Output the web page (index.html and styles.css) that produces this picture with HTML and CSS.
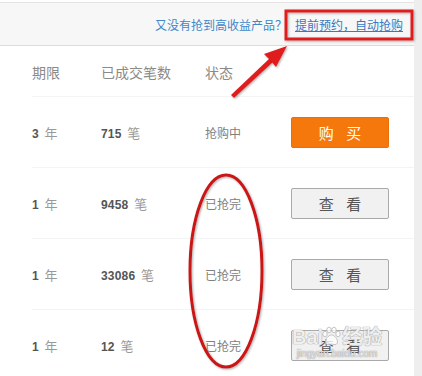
FILE: index.html
```html
<!DOCTYPE html>
<html lang="zh-CN">
<head>
    <meta charset="UTF-8">
    <title>产品列表</title>
    <link rel="stylesheet" href="styles.css">
</head>
<body>
    <div class="page">
        <div class="main">
            <div class="topbar">
                <span class="tip">又没有抢到高收益产品？</span>
                <a class="reserve" href="#">提前预约，自动抢购</a>
            </div>

            <div class="table">
                <div class="row head">
                    <div>期限</div>
                    <div>已成交笔数</div>
                    <div>状态</div>
                    <div></div>
                </div>
                <div class="row">
                    <div><b>3</b> <span class="unit">年</span></div>
                    <div><b>715</b> <span class="unit">笔</span></div>
                    <div class="status">抢购中</div>
                    <div><button class="btn buy">购 买</button></div>
                </div>
                <div class="row">
                    <div><b>1</b> <span class="unit">年</span></div>
                    <div><b>9458</b> <span class="unit">笔</span></div>
                    <div class="status">已抢完</div>
                    <div><button class="btn view">查 看</button></div>
                </div>
                <div class="row">
                    <div><b>1</b> <span class="unit">年</span></div>
                    <div><b>33086</b> <span class="unit">笔</span></div>
                    <div class="status">已抢完</div>
                    <div><button class="btn view">查 看</button></div>
                </div>
                <div class="row">
                    <div><b>1</b> <span class="unit">年</span></div>
                    <div><b>12</b> <span class="unit">笔</span></div>
                    <div class="status">已抢完</div>
                    <div><button class="btn view">查 看</button></div>
                </div>
            </div>
        </div>
        <div class="strip"></div>
    </div>

    <!-- hand-drawn annotations on top of the screenshot -->
    <svg class="marks" width="422" height="376" viewBox="0 0 422 376">
        <defs>
            <filter id="shade" x="-20%" y="-20%" width="140%" height="140%">
                <feDropShadow dx="1" dy="1" stdDeviation="1" flood-color="#777" flood-opacity="0.6"/>
            </filter>
        </defs>
        <rect x="286" y="11" width="126" height="28" fill="none" stroke="#e01a1a" stroke-width="3" filter="url(#shade)"/>
        <g filter="url(#shade)" fill="#e01a1a">
            <polygon points="231,95 234,98 273,62 270,58"/>
            <polygon points="287,46 264,54 270,60 276,67"/>
        </g>
        <ellipse cx="226" cy="271" rx="36" ry="96" fill="none" stroke="#cc1414" stroke-width="3" filter="url(#shade)"/>
    </svg>

    <div class="watermark">
        <div class="wm-brand">
            <span>Bai</span>
            <svg class="paw" width="20" height="20" viewBox="0 0 20 20">
                <g fill="rgba(255,255,255,0.8)" stroke="#b5b5b5" stroke-width="0.8">
                    <ellipse cx="4" cy="8" rx="2.2" ry="2.8"/>
                    <ellipse cx="8" cy="4" rx="2.2" ry="2.8"/>
                    <ellipse cx="13" cy="4" rx="2.2" ry="2.8"/>
                    <ellipse cx="17" cy="8" rx="2.2" ry="2.8"/>
                    <path d="M10.5 9c-3 0-6 4-6 7 0 2 2 3 3.5 2.5 1.5-.5 3.5-.5 5 0C14.5 19 16.5 18 16.5 16c0-3-3-7-6-7z"/>
                </g>
            </svg>
            <span>经验</span>
        </div>
        <span class="wm-url">jingyan.baidu.com</span>
    </div>
</body>
</html>
```

FILE: styles.css
```css
body {
    margin: 0;
    background: #fff;
    font-family: "Noto Sans CJK SC", "Liberation Sans", sans-serif;
    width: 422px;
    height: 376px;
    overflow: hidden;
    position: relative;
}

.page {
    display: flex;
    height: 376px;
}

.main {
    width: 414px;
    padding-top: 2px;
}

.strip {
    width: 8px;
    background: #eeeeef;
}

.topbar {
    height: 44px;
    border-top: 1px solid #e4e4e4;
    border-bottom: 1px solid #dcdcdc;
    background: #f7f7f7;
    display: flex;
    justify-content: flex-end;
    align-items: center;
    padding: 1px 11px 0 0;
    box-sizing: border-box;
    font-size: 12px;
    line-height: 1;
}

.tip {
    color: #3f88c8;
    margin-right: 8px;
}

.reserve {
    color: #3a78c0;
    text-decoration: underline;
}

.table {
    padding-left: 32px;
}

.row {
    display: grid;
    grid-template-columns: 69px 104px 86px 98px;
    align-items: center;
    height: 71px;
    border-bottom: 1px solid #f4f4f4;
    box-sizing: border-box;
    color: #999;
    font-size: 12px;
}

.row.head {
    height: 51px;
    font-size: 14px;
    color: #8a8a8a;
    padding-top: 2px;
}

.row b {
    font-family: "Liberation Sans", sans-serif;
    font-weight: bold;
    color: #555;
    font-size: 12px;
    letter-spacing: 0.2px;
}

.unit {
    margin-left: 3px;
    font-size: 13px;
    color: #999;
}

.status {
    color: #808080;
}

.btn {
    width: 98px;
    height: 31px;
    font-family: "Noto Sans CJK SC", sans-serif;
    font-size: 15px;
    word-spacing: 9px;
    border-radius: 2px;
    cursor: pointer;
    padding: 0;
}

.buy {
    background: #f5780c;
    border: 1px solid #e8700a;
    color: #fff;
}

.view {
    background: #f1f1f1;
    border: 1px solid #a9a9a9;
    color: #555;
}

.marks {
    position: absolute;
    left: 0;
    top: 0;
    pointer-events: none;
}

.watermark {
    position: absolute;
    left: 292px;
    top: 326px;
    display: flex;
    flex-direction: column;
    align-items: center;
    color: rgba(255, 255, 255, 0.85);
    text-shadow: 0 0 1px #999, 0 0 1px #999;
    pointer-events: none;
}

.wm-brand {
    display: flex;
    align-items: flex-end;
    font-family: "Liberation Sans", "Noto Sans CJK SC", sans-serif;
    font-weight: bold;
    font-size: 20px;
    line-height: 22px;
}

.paw {
    margin: 0 1px 2px -2px;
}

.wm-url {
    font-family: "Liberation Sans", sans-serif;
    font-size: 10px;
    line-height: 12px;
    color: rgba(255, 255, 255, 0.7);
}
```
